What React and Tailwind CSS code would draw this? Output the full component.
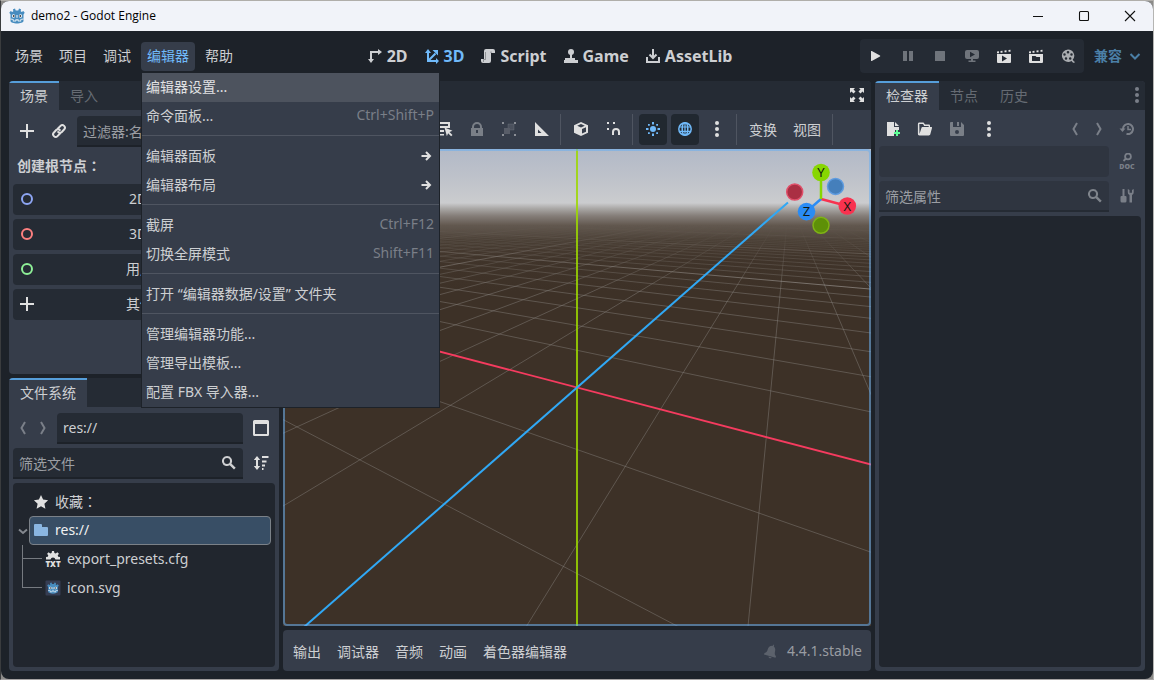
import React from "react";

const ICONS = {
  mode2d: (
    <>
      <path d="M4 12V4h8" fill="none" stroke="currentColor" strokeWidth="2" />
      <path d="M11 1l4 3-4 3zM1 11l3 4 3-4z" />
    </>
  ),
  mode3d: (
    <>
      <path d="M4 4v9h9M4 13l7.500-7.500" fill="none" stroke="currentColor" strokeWidth="2" />
      <path d="M1 5l3-4 3 4zM12 10l3 3-3 3zM8.500 2H14v5.500z" />
    </>
  ),
  script: (
    <>
      <path d="M6 1a2 2 0 0 0-2 2v8H1v2a2 2 0 0 0 2 2h6a2 2 0 0 0 2-2V5h4V3a2 2 0 0 0-2-2z" />
      <path d="M5.500 4v7.500h-2V14" fill="none" stroke="#1d2229" strokeOpacity=".35" />
      <path d="M11 5V3.500" fill="none" stroke="#1d2229" strokeOpacity=".45" />
    </>
  ),
  game: (
    <>
      <circle cx="8" cy="4" r="3" />
      <path d="M7 5h2v5h3v2h3v3H1v-3h1v-2h5z" />
    </>
  ),
  assetlib: (
    <path d="M8 1v8M4.500 6.500L8 10l3.500-3.500M2 9v5h12V9" fill="none" stroke="currentColor" strokeWidth="2" />
  ),
  play: <path d="M3 3.500v9a.5.5 0 0 0 .8.4l8.200-4.500a.5.5 0 0 0 0-.8L3.800 3.100a.5.5 0 0 0-.8.4z" />,
  pause: <path d="M3 3h4v10H3zM9 3h4v10H9z" />,
  stop: <rect x="3" y="3" width="10" height="10" rx=".6" />,
  remote: (
    <path
      fillRule="evenodd"
      d="M3 2a2 2 0 0 0-2 2v5a2 2 0 0 0 2 2h4v1.500H4.500V14h7v-1.500H9V11h4a2 2 0 0 0 2-2V4a2 2 0 0 0-2-2zM6 3.700l5 2.800-5 2.800z"
    />
  ),
  playScene: (
    <>
      <path fillRule="evenodd" d="M1 6h14v8a1 1 0 0 1-1 1H2a1 1 0 0 1-1-1zM6 7.500v6l5-3z" />
      <path d="M1 3.500l2-.3v2H1zM4.500 3l2-.3v2h-2zM8.500 2.500l2-.3v2h-2zM12.500 2l2-.3v2h-2z" />
    </>
  ),
  playCustom: (
    <>
      <path fillRule="evenodd" d="M1 6h14v8a1 1 0 0 1-1 1H2a1 1 0 0 1-1-1zM4 8v5h8V9H8.500l-1-1z" />
      <path d="M1 3.500l2-.3v2H1zM4.500 3l2-.3v2h-2zM8.500 2.500l2-.3v2h-2zM12.500 2l2-.3v2h-2z" />
    </>
  ),
  movie: (
    <path
      fillRule="evenodd"
      d="M8 1.500a6.200 6.200 0 1 0 3.500 11.400c.6.7 1.200 2 3 2.100v-1.600c-1 0-1.200-.8-1.800-1.600A6.200 6.200 0 0 0 8 1.500zM8 3a1.300 1.300 0 1 1 0 2.600A1.300 1.300 0 0 1 8 3zM4.500 5.200a1.200 1.200 0 1 1 0 2.500 1.200 1.200 0 0 1 0-2.500zM11.500 5.200a1.200 1.200 0 1 1 0 2.500 1.200 1.200 0 0 1 0-2.500zM6 9.200a1.200 1.200 0 1 1 0 2.500 1.200 1.200 0 0 1 0-2.500zM10.200 9.200a1.200 1.200 0 1 1 0 2.500 1.200 1.200 0 0 1 0-2.500z"
    />
  ),
  chevronDown: <path d="M3.500 6L8 10.500 12.500 6" fill="none" stroke="currentColor" strokeWidth="2" />,
  back: <path d="M10 2L6.500 8 10 14" fill="none" stroke="currentColor" strokeWidth="2" />,
  forward: <path d="M6 2l3.500 6L6 14" fill="none" stroke="currentColor" strokeWidth="2" />,
  add: <path d="M7 1h2v6h6v2H9v6H7V9H1V7h6z" />,
  link: (
    <g fill="none" stroke="currentColor" strokeWidth="2" strokeLinecap="round">
      <path d="M7 5.500l2.500-2.600a2.500 2.500 0 0 1 3.600 3.600L10.800 9a2.500 2.500 0 0 1-3.600 0" />
      <path d="M9 10.500l-2.500 2.600a2.500 2.500 0 0 1-3.600-3.600L5.200 7a2.500 2.500 0 0 1 3.600 0" />
    </g>
  ),
  ring: <circle cx="8" cy="8" r="5" fill="none" stroke="currentColor" strokeWidth="2" />,
  submenu: <path d="M3.500 8h8M8 4l4 4-4 4" fill="none" stroke="currentColor" strokeWidth="2" />,
  expand: (
    <path d="M1 1h5L4.500 2.500l2 2-2 2-2-2L1 6zM15 1v5l-1.500-1.500-2 2-2-2 2-2L10 1zM1 15v-5l1.500 1.500 2-2 2 2-2 2L6 15zM15 15h-5l1.500-1.500-2-2 2-2 2 2L15 10z" />
  ),
  cursor: <path d="M2 2l12 5-5 2-2 5z" />,
  move: <path d="M8 1l3 3H9v3h3V5l3 3-3 3V9H9v3h2l-3 3-3-3h2V9H4v2L1 8l3-3v2h3V4H5z" />,
  rotate: <path d="M13 8a5 5 0 1 1-2-4M12 1v4H8" fill="none" stroke="currentColor" strokeWidth="2" />,
  scale: <path d="M3 13L13 3M8 3h5v5M3 8v5h5" fill="none" stroke="currentColor" strokeWidth="2" />,
  listSelect: (
    <>
      <path d="M1 1h12v2H1zM1 5h12v2H1zM1 9h6v2H1zM1 13h6v1.500H1z" />
      <path d="M11 2h2v5h-2zM7.500 6.500l8 3.200-3 1.200 3 3-1.400 1.400-3-3-1.200 3z" />
    </>
  ),
  lock: (
    <path
      fillRule="evenodd"
      d="M8 1a5 5 0 0 0-5 5v1H2v8h12V7h-1V6a5 5 0 0 0-5-5zM8 3a3 3 0 0 1 3 3v1H5V6a3 3 0 0 1 3-3zM7 9h2v3H7z"
    />
  ),
  group: (
    <>
      <path d="M1 1h2v2H1zM13 1h2v2h-2zM1 13h2v2H1zM13 13h2v2h-2z" />
      <path d="M7 3h6v6H9V7H7z" opacity=".25" />
      <path d="M3 7h6v6H3z" opacity=".4" />
      <path d="M7 7V3h6v6H9" fill="none" stroke="currentColor" strokeOpacity=".25" />
    </>
  ),
  ruler: <path fillRule="evenodd" d="M2 1v14h14zM5 8.500l3.500 3.500H5z" />,
  cube: (
    <path fillRule="evenodd" d="M8 1l7 3.200v7.600L8 15l-7-3.200V4.200zM9 8v4.600l4-1.900V6.200zM8 3L4.200 4.700 8 6.400l3.800-1.700z" />
  ),
  snap: (
    <>
      <path d="M2 1h2v2H2zM8 1h2v2H8zM2 7h2v2H2z" />
      <path d="M8 14v-3a3 3 0 0 1 6 0v3" fill="none" stroke="currentColor" strokeWidth="2" />
    </>
  ),
  sun: (
    <>
      <circle cx="8" cy="8" r="3" />
      <path d="M7 1h2v2.500H7zM7 12.500h2V15H7zM1 7h2.500v2H1zM12.500 7H15v2h-2.500zM3 3h1.800v1.800H3zM11.200 3H13v1.800h-1.800zM3 11.200h1.800V13H3zM11.200 11.200H13V13h-1.800z" />
    </>
  ),
  globe: (
    <g fill="none" stroke="currentColor" strokeWidth="1.500">
      <circle cx="8" cy="8" r="6.200" />
      <ellipse cx="8" cy="8" rx="2.800" ry="6.200" />
      <path d="M2 6h12M2 10.300h12M8 2v12" strokeWidth="1.200" />
    </g>
  ),
  dots: (
    <>
      <circle cx="8" cy="2" r="2" />
      <circle cx="8" cy="8" r="2" />
      <circle cx="8" cy="14" r="2" />
    </>
  ),
  newFile: (
    <>
      <path d="M2 1h7v5h5v3h-4v2H9v4H2zM10 1l4 4h-4z" />
      <path d="M11 9h2v2h2v2h-2v2h-2v-2H9v-2h2z" fill="#5fff97" />
    </>
  ),
  openFolder: (
    <path
      fillRule="evenodd"
      d="M2 1.500A1.500 1.500 0 0 0 .9 3v9.500a1.700 1.700 0 0 0 1.600 2h9.300c.7 0 1.300-.5 1.500-1.200L15 7c.2-.6-.2-1-.8-1H13V4.500a1 1 0 0 0-1-1H8L6.500 1.500zM2.300 3H6l1.200 2h4.500v1H5.500a1 1 0 0 0-1 .8l-2 6.200z"
    />
  ),
  save: (
    <path
      fillRule="evenodd"
      d="M2 1a1 1 0 0 0-1 1v12a1 1 0 0 0 1 1h12a1 1 0 0 0 1-1V4l-3-3v5H4V1zM8 1h2v4H8zM8 9a2 2 0 1 1 0 4 2 2 0 0 1 0-4z"
    />
  ),
  history: (
    <>
      <path d="M4 8a5 5 0 1 1 3.500 4.800" fill="none" stroke="currentColor" strokeWidth="2" />
      <path d="M.5 7.500h6L3.500 11z" />
      <path d="M9 5v3.500h3" fill="none" stroke="currentColor" strokeWidth="1.500" />
    </>
  ),
  search: (
    <path d="M6 1a5 5 0 1 0 2.700 9.200l4.300 4.300 1.700-1.700-4.300-4.300A5 5 0 0 0 6 1zM6 3a3 3 0 1 1 0 6 3 3 0 0 1 0-6z" fillRule="evenodd" />
  ),
  doc: (
    <>
      <g fill="none" stroke="currentColor" strokeWidth="1.800">
        <circle cx="9" cy="3.500" r="2.900" />
        <path d="M7 5.500L4.500 8" />
      </g>
      <text x="8" y="15.800" fontSize="7" fontWeight="900" textAnchor="middle">
        DOC
      </text>
    </>
  ),
  tools: (
    <>
      <path d="M3.500 1h2v7H6.500a1 1 0 0 1 1 1v4A1.500 1.500 0 0 1 6 14.500H3A1.500 1.500 0 0 1 1.500 13V9a1 1 0 0 1 1-1h1z" />
      <path d="M8.800 1v3.200A3 3 0 0 0 10.500 7v7.500h2.500V7a3 3 0 0 0 1.700-2.800V1l-1.700 1v2.700h-2.500V2z" />
    </>
  ),
  splitView: (
    <path fillRule="evenodd" d="M1.500 0A1.500 1.500 0 0 0 0 1.500v13A1.500 1.500 0 0 0 1.500 16h13a1.500 1.500 0 0 0 1.500-1.500v-13A1.500 1.500 0 0 0 14.500 0zM2 4h12v10H2z" />
  ),
  sort: (
    <>
      <path d="M4 1l3.200 4H5v6h2.200L4 15 .8 11H3V5H.8z" />
      <path d="M9 1h6.500v2H9zM9 5.500h4.500v2H9zM9 9.500h3v2H9zM9 13h1.500v2H9z" />
    </>
  ),
  star: <path d="M8 1l2.100 4.600 5 .6-3.700 3.500 1 5L8 12.200l-4.400 2.500 1-5L.9 6.200l5-.6z" />,
  folder: <path d="M2 2a1 1 0 0 0-1 1v10a1 1 0 0 0 1 1h12a1 1 0 0 0 1-1V6a1 1 0 0 0-1-1H9V3a1 1 0 0 0-1-1z" />,
  cfg: (
    <>
      <path d="M7 0h2l.4 2 1.300.5L12.400 1.300l1.500 1.500-1.200 1.700.5 1.300L15 6v2.500H10.500a2.600 2.600 0 0 0-5 0H1V6l1.800-.2.5-1.300L2.100 2.800l1.500-1.500 1.700 1.200L6.600 2z" />
      <text x="8" y="15.800" fontSize="8" fontWeight="900" textAnchor="middle">
        TXT
      </text>
    </>
  ),
  bell: (
    <path d="M10.500 1.500l-.5 1.300C7 2.500 5.300 4 4.700 6.500c-.5 2-1.200 2.800-3.200 3.500l-.5 1.500 11.500 3.200.5-1.500c-1.200-1.500-1.500-2.500-1-4.500.6-2.300.2-4-1.200-5.200l.4-1.400zM5.500 13.500a1.700 1.700 0 0 0 3.200.9z" />
  ),
};

function Icon({ name, className = "" }) {
  return (
    <svg viewBox="0 0 16 16" width="16" height="16" fill="currentColor" aria-hidden="true" className={`shrink-0 ${className}`}>
      {ICONS[name]}
    </svg>
  );
}

function GodotLogo({ className = "", framed = false }) {
  return (
    <svg viewBox="0 0 16 16" width="16" height="16" aria-hidden="true" className={`shrink-0 ${className}`}>
      {framed && <rect x=".5" y=".5" width="15" height="15" rx="1" fill="#363d52" />}
      <g transform={framed ? "translate(2 2) scale(.75)" : undefined}>
        <path
          fill="#478cbf"
          d="M6 .5l.7 2h2.600l.7-2 2 .8-.3 2 1 .8 1.600-1 1.400 1.600-1.200 1.800V13c0 1.500-3.500 2.500-6.500 2.500S1.500 14.500 1.500 13V6.500L.3 4.700l1.400-1.600 1.600 1 1-.8-.3-2z"
        />
        <path fill="#fff" d="M1.500 10.500l3 .4.200 1.600h1.600l.2-1.200h3l.2 1.200h1.600l.2-1.600 3-.4v1l-2.200.3-.2 1.700H9L8.700 12.400H7.300L7 13.500H3.900l-.2-1.700-2.200-.3z" opacity=".85" />
        <circle cx="4.500" cy="8" r="1.700" fill="#fff" />
        <circle cx="11.500" cy="8" r="1.700" fill="#fff" />
        <circle cx="4.700" cy="8.100" r="1" fill="#414042" />
        <circle cx="11.300" cy="8.100" r="1" fill="#414042" />
        <rect x="7.500" y="7" width="1" height="2.800" fill="#fff" />
      </g>
    </svg>
  );
}

function IconButton({ name, label, className = "text-[#e0e0e0]" }) {
  return (
    <button type="button" aria-label={label} className={`flex h-[31px] w-7 shrink-0 items-center justify-center rounded-sm pb-px ${className}`}>
      <Icon name={name} />
    </button>
  );
}

function Tab({ label, active = false }) {
  return (
    <button
      type="button"
      role="tab"
      aria-selected={active}
      className={`h-[29px] border-t-2 px-[11px] pb-0.5 text-sm leading-6 ${
        active ? "border-[#569eda] bg-[#363d4a] text-[#cdcfd2]" : "border-transparent text-[#666b73]"
      }`}
    >
      {label}
    </button>
  );
}

function Dock({ tabs, extra, className = "", children }) {
  return (
    <section className={`flex flex-col overflow-hidden rounded-sm bg-[#363d4a] ${className}`}>
      <div role="tablist" className="flex h-[29px] shrink-0 items-center bg-[#252b34]">
        {tabs.map((t, i) => (
          <Tab key={t} label={t} active={i === 0} />
        ))}
        {extra}
      </div>
      {children}
    </section>
  );
}

function Heading({ children }) {
  return (
    <span>
      {children}
      <span className="font-['Noto_Sans_CJK_TC',sans-serif]">：</span>
    </span>
  );
}

const FIELD =
  "h-[31px] w-full min-w-0 rounded-t-sm border-b-2 border-[#1d2229] bg-[#252b34] px-1.5 text-sm text-[#cdcfd2] outline-none placeholder:text-[#9b9ea3] placeholder-shown:pt-0.5";

const MENU = [
  { label: "编辑器设置...", hot: true },
  { label: "命令面板...", keys: "Ctrl+Shift+P" },
  null,
  { label: "编辑器面板", sub: true },
  { label: "编辑器布局", sub: true },
  null,
  { label: "截屏", keys: "Ctrl+F12" },
  { label: "切换全屏模式", keys: "Shift+F11" },
  null,
  { label: "打开 “编辑器数据/设置” 文件夹" },
  null,
  { label: "管理编辑器功能..." },
  { label: "管理导出模板..." },
  { label: "配置 FBX 导入器..." },
];

function EditorMenu() {
  return (
    <div role="menu" className="absolute left-0 top-full z-20 mt-px w-[299px] border border-[#1d2229] bg-[#363d4a] text-sm text-[#cdcfd2]">
      {MENU.map((item, i) =>
        item ? (
          <button
            key={i}
            type="button"
            role="menuitem"
            className={`flex h-[29px] w-full items-center justify-between pl-1 pr-[5px] ${item.hot ? "bg-[#4d535e] text-[#e0e1e3]" : ""}`}
          >
            <span>{item.label}</span>
            {item.keys && <span className="pb-0.5 text-[#7a7f88]">{item.keys}</span>}
            {item.sub && <Icon name="submenu" className="text-[#e0e0e0]" />}
          </button>
        ) : (
          <div key={i} role="separator" className="flex h-[11px] items-start pt-1">
            <div className="h-px w-full bg-[#4f5561]" />
          </div>
        )
      )}
    </div>
  );
}

const MENU_BAR = ["场景", "项目", "调试", "编辑器", "帮助"];
const MODES = [
  ["mode2d", "2D"],
  ["mode3d", "3D"],
  ["script", "Script"],
  ["game", "Game"],
  ["assetlib", "AssetLib"],
];
const RUN = [
  ["play", "运行项目", "text-[#e0e0e0]"],
  ["pause", "暂停", "text-[#6f747b]"],
  ["stop", "停止", "text-[#6f747b]"],
  ["remote", "远程部署", "text-[#6f747b]"],
  ["playScene", "运行当前场景", "text-[#e0e0e0]"],
  ["playCustom", "运行指定场景", "text-[#e0e0e0]"],
  ["movie", "影片制作模式", "text-[#a9acb0]"],
];

function TopBar() {
  return (
    <header className="flex h-[50px] shrink-0 items-center justify-between px-2">
      <nav className="flex gap-1">
        {MENU_BAR.map((m) => {
          const open = m === "编辑器";
          return (
            <div key={m} className="relative">
              <button
                type="button"
                aria-expanded={open}
                className={`block h-[29px] rounded-sm px-1.5 text-sm ${open ? "bg-[#363d4a] text-[#70bafa]" : "text-[#cdcfd2]"}`}
              >
                {m}
              </button>
              {open && <EditorMenu />}
            </div>
          );
        })}
      </nav>
      <div className="flex">
        {MODES.map(([icon, label]) => (
          <button
            key={label}
            type="button"
            className={`flex h-8 items-center gap-1 px-2 text-base font-bold ${label === "3D" ? "text-[#70bafa]" : "text-[#cdcfd2]"}`}
          >
            <Icon name={icon} />
            {label}
          </button>
        ))}
      </div>
      <div className="flex items-center">
        <div className="flex rounded-sm bg-[#252b34]">
          {RUN.map(([icon, label, color]) => (
            <button key={icon} type="button" aria-label={label} className={`flex h-[34px] w-8 items-center justify-center ${color}`}>
              <Icon name={icon} />
            </button>
          ))}
        </div>
        <button type="button" className="flex items-center gap-[5px] pl-2.5 pr-0.5 text-sm font-bold text-[#4b7fa6]">
          兼容
          <Icon name="chevronDown" />
        </button>
      </div>
    </header>
  );
}

const ROOTS = [
  ["ring", "2D 场景", "text-[#8da5f3]"],
  ["ring", "3D 场景", "text-[#fc7f7f]"],
  ["ring", "用户界面", "text-[#8eef97]"],
  ["add", "其他节点", "text-[#e0e0e0]"],
];

function SceneDock() {
  return (
    <Dock tabs={["场景", "导入"]} className="flex-1">
      <div className="flex items-center gap-1 px-1 pt-1.5">
        <IconButton name="add" label="添加节点" />
        <IconButton name="link" label="实例化场景" />
        <input aria-label="过滤器" placeholder="过滤器:名称" className={FIELD} />
      </div>
      <div className="flex h-[37px] items-center px-2 text-sm font-bold text-[#cdcfd2]">
        <Heading>创建根节点</Heading>
      </div>
      <div className="flex flex-col gap-1 px-1">
        {ROOTS.map(([icon, label, color]) => (
          <button key={label} type="button" className="flex h-[31px] items-center rounded-sm bg-[#252b34] pb-px pl-1.5 text-sm text-[#cdcfd2]">
            <Icon name={icon} className={color} />
            <span className="flex-1 pr-0.5 text-center">{label}</span>
          </button>
        ))}
      </div>
    </Dock>
  );
}

function FileSystemDock() {
  return (
    <Dock tabs={["文件系统"]} className="flex-1">
      <div className="flex flex-1 flex-col gap-1 p-1">
        <div className="flex items-center gap-1 pt-0.5">
          <div className="flex w-10 shrink-0 justify-center gap-1 pb-px text-[#7a7f88]">
            <button type="button" aria-label="后退">
              <Icon name="back" />
            </button>
            <button type="button" aria-label="前进">
              <Icon name="forward" />
            </button>
          </div>
          <input aria-label="路径" defaultValue="res://" className={FIELD} />
          <IconButton name="splitView" label="切换拆分模式" />
        </div>
        <div className="flex items-center gap-1">
          <div className="relative flex-1">
            <input aria-label="筛选文件" placeholder="筛选文件" className={FIELD} />
            <Icon name="search" className="pointer-events-none absolute right-1.5 top-[7px] text-[#cfd0d2]" />
          </div>
          <IconButton name="sort" label="文件排序" />
        </div>
        <div role="tree" className="flex-1 rounded-sm bg-[#21262e] p-1 text-sm text-[#cdcfd2]">
          <div role="treeitem" className="flex h-[29px] items-center gap-1.5 pl-4">
            <Icon name="star" className="text-[#e0e0e0]" />
            <Heading>收藏</Heading>
          </div>
          <div className="flex items-center">
            <button type="button" aria-label="折叠" className="-ml-0.5 w-[14px] text-[#84888f]">
              <svg viewBox="0 0 14 14" width="14" height="14" aria-hidden="true">
                <path d="M4 5.500l4 3.500 4-3.500" fill="none" stroke="currentColor" strokeWidth="2" />
              </svg>
            </button>
            <div role="treeitem" aria-selected="true" className="flex h-[29px] flex-1 items-center gap-1.5 rounded-sm border border-[#7b8188] bg-[#384e65] pb-0.5 pl-[3px] text-[#f0f1f2]">
              <Icon name="folder" className="text-[#8ab6e1]" />
              res://
            </div>
          </div>
          <div className="flex">
            <div className="ml-[5px] w-5">
              <div className="h-[14px] border-b border-l border-[#767a80]" />
              <div className="h-[29px] border-b border-l border-[#767a80]" />
            </div>
            <div className="pl-[3px]">
              <div role="treeitem" className="flex h-[29px] items-center gap-1.5 pb-0.5">
                <Icon name="cfg" className="text-[#e0e0e0]" />
                export_presets.cfg
              </div>
              <div role="treeitem" className="flex h-[29px] items-center gap-1.5 pb-0.5">
                <GodotLogo framed />
                icon.svg
              </div>
            </div>
          </div>
        </div>
      </div>
    </Dock>
  );
}

const VIEW_W = 588;
const VIEW_H = 477;
const FOCAL = VIEW_H / 2 / Math.tan((35 * Math.PI) / 180);
const S = Math.sin(0.5);
const C = Math.cos(0.5);
const DISTANCE = 4;
const depthAt = (x, z) => DISTANCE - S * C * x - C * C * z;

function project(x, z) {
  const d = depthAt(x, z);
  return [VIEW_W / 2 + (FOCAL * (C * x - S * z)) / d, VIEW_H / 2 + (FOCAL * (S * S * x + C * S * z)) / d];
}

function groundLine(x1, z1, x2, z2) {
  const near = 0.3;
  const d1 = depthAt(x1, z1);
  const d2 = depthAt(x2, z2);
  if (d1 < near && d2 < near) return "";
  let a = [x1, z1];
  let b = [x2, z2];
  const t = (near - d1) / (d2 - d1);
  const cut = [x1 + (x2 - x1) * t, z1 + (z2 - z1) * t];
  if (d1 < near) a = cut;
  if (d2 < near) b = cut;
  return `M${project(...a).map((v) => v.toFixed(2)).join(" ")}L${project(...b).map((v) => v.toFixed(2)).join(" ")}`;
}

const EXTENT = 72;
let minor = "";
let major = "";
for (let i = -EXTENT; i <= EXTENT; i++) {
  if (i === 0) continue;
  const d = groundLine(i, -EXTENT, i, EXTENT) + groundLine(-EXTENT, i, EXTENT, i);
  if (i % 8 === 0) major += d;
  else minor += d;
}
const xAxis = groundLine(-400, 0, 400, 0);
const zAxis = groundLine(0, -1000, 0, 1000);

function Viewport() {
  return (
    <div className="relative flex-1 overflow-hidden bg-[#3d3127]">
      <svg
        role="img"
        aria-label="3D 视口"
        viewBox={`0 0 ${VIEW_W} ${VIEW_H}`}
        preserveAspectRatio="xMidYMid slice"
        className="absolute inset-0 h-full w-full"
      >
        <defs>
          <linearGradient id="sky" x1="0" y1="0" x2="0" y2={VIEW_H} gradientUnits="userSpaceOnUse">
            <stop offset="0" stopColor="#b2b9c7" />
            <stop offset=".06" stopColor="#bec2ca" />
            <stop offset=".113" stopColor="#cbccce" />
            <stop offset=".125" stopColor="#a9a7a5" />
            <stop offset=".14" stopColor="#857e79" />
            <stop offset=".16" stopColor="#62584f" />
            <stop offset=".19" stopColor="#4a3f35" />
            <stop offset=".23" stopColor="#40342a" />
            <stop offset=".3" stopColor="#3d3127" />
          </linearGradient>
          <linearGradient id="fade" x1="0" y1="0" x2="0" y2={VIEW_H} gradientUnits="userSpaceOnUse">
            <stop offset=".16" stopColor="#000" />
            <stop offset=".22" stopColor="#777" />
            <stop offset=".3" stopColor="#fff" />
          </linearGradient>
          <mask id="horizon" maskUnits="userSpaceOnUse" x="0" y="0" width={VIEW_W} height={VIEW_H}>
            <rect width={VIEW_W} height={VIEW_H} fill="url(#fade)" />
          </mask>
        </defs>
        <rect width={VIEW_W} height={VIEW_H} fill="url(#sky)" />
        <g mask="url(#horizon)" fill="none">
          <path d={minor} stroke="#8a8680" strokeOpacity=".45" />
          <path d={major} stroke="#c4c2bf" strokeOpacity=".5" />
        </g>
        <path d={xAxis} fill="none" stroke="#f53b5f" strokeWidth="1.800" />
        <path d={`M${VIEW_W / 2} 0V${VIEW_H}`} stroke="#9cd800" strokeOpacity=".85" strokeWidth="2" />
        <path d={zAxis} fill="none" stroke="#30a8f5" strokeWidth="2" />
      </svg>
      <svg viewBox="0 0 100 100" width="100" height="100" role="img" aria-label="视图方向" className="absolute right-0 top-0">
        <circle cx="23.700" cy="43" r="8" fill="#aa2f43" stroke="#e0506a" strokeWidth="1.500" />
        <circle cx="64.500" cy="37.400" r="8" fill="#457fbb" stroke="#5f9ce0" strokeWidth="1.500" />
        <circle cx="50" cy="76.300" r="8" fill="#5e9008" stroke="#7fb315" strokeWidth="1.500" />
        <g strokeWidth="2.500">
          <path d="M50 50L76.300 57" stroke="#f8324f" />
          <path d="M50 50L35.500 62.600" stroke="#2a8cf5" />
          <path d="M50 50V23.500" stroke="#87d602" />
        </g>
        <circle cx="76.300" cy="57" r="8.800" fill="#f8324f" />
        <circle cx="35.500" cy="62.600" r="8.800" fill="#2a8cf5" />
        <circle cx="50" cy="23.500" r="8.800" fill="#87d602" />
        <g fontSize="13" textAnchor="middle" fill="#111a10">
          <text x="76.300" y="61.500">X</text>
          <text x="35.500" y="67">Z</text>
          <text x="50" y="28">Y</text>
        </g>
      </svg>
      <div className="pointer-events-none absolute inset-0 rounded-sm border-2 border-[#69aef0]/55" />
    </div>
  );
}

function Divider() {
  return (
    <div className="flex h-[31px] w-1 shrink-0 pl-px">
      <div className="w-px bg-[#4f5561]" />
    </div>
  );
}

function ViewportPanel() {
  return (
    <section className="flex min-w-0 flex-1 flex-col gap-1">
      <div className="flex flex-1 flex-col overflow-hidden rounded-t-sm bg-[#363d4a]">
        <div className="flex h-[29px] shrink-0 items-center justify-end bg-[#252b34]">
          <IconButton name="expand" label="专注模式" />
        </div>
        <div className="flex h-[39px] shrink-0 items-center gap-1 px-1 text-sm text-[#cdcfd2]">
          <IconButton name="cursor" label="选择" />
          <Divider />
          <IconButton name="move" label="移动" />
          <IconButton name="rotate" label="旋转" />
          <IconButton name="scale" label="缩放" />
          <Divider />
          <IconButton name="listSelect" label="列出可选节点" />
          <IconButton name="lock" label="锁定" className="text-[#7a7f87]" />
          <IconButton name="group" label="编组" className="text-[#8b8f96]" />
          <IconButton name="ruler" label="标尺" />
          <Divider />
          <IconButton name="cube" label="本地空间" />
          <IconButton name="snap" label="吸附" />
          <Divider />
          <IconButton name="sun" label="预览阳光" className="bg-[#212830] text-[#70bafa]" />
          <IconButton name="globe" label="预览环境" className="bg-[#212830] text-[#70bafa]" />
          <IconButton name="dots" label="更多" />
          <Divider />
          <button type="button" className="shrink-0 px-1.5">变换</button>
          <button type="button" className="shrink-0 px-1.5">视图</button>
          <Divider />
        </div>
        <Viewport />
      </div>
      <div className="flex h-[41px] shrink-0 items-center gap-4 rounded-sm bg-[#363d4a] pl-2.5 pr-[9px] text-sm text-[#cdcfd2]">
        {["输出", "调试器", "音频", "动画", "着色器编辑器"].map((t) => (
          <button key={t} type="button" className="pt-0.5">
            {t}
          </button>
        ))}
        <div className="ml-auto flex items-center gap-2 text-[#999ca2]">
          <Icon name="bell" className="text-[#5c626c]" />
          <span>4.4.1.stable</span>
        </div>
      </div>
    </section>
  );
}

function InspectorDock() {
  return (
    <Dock
      tabs={["检查器", "节点", "历史"]}
      className="w-[270px] shrink-0"
      extra={
        <button type="button" aria-label="面板选项" className="ml-auto w-4 pb-px text-[#7a7f88]">
          <Icon name="dots" />
        </button>
      }
    >
      <div className="flex flex-1 flex-col gap-1 px-1 pb-1">
        <div className="flex h-8 items-center gap-1 pt-[7px]">
          <IconButton name="newFile" label="新建资源" />
          <IconButton name="openFolder" label="加载资源" />
          <IconButton name="save" label="保存资源" className="text-[#7a7f87]" />
          <IconButton name="dots" label="更多选项" />
          <div className="ml-auto flex items-center gap-2 text-[#7a7f88]">
            <button type="button" aria-label="上一个" className="pb-px">
              <Icon name="back" />
            </button>
            <button type="button" aria-label="下一个" className="pb-px">
              <Icon name="forward" />
            </button>
            <IconButton name="history" label="对象历史" className="-ml-0.5 text-[#7a7f88]" />
          </div>
        </div>
        <div className="flex items-center gap-1">
          <button type="button" aria-label="对象" className="h-[31px] flex-1 rounded-sm bg-[#2f3540]" />
          <IconButton name="doc" label="打开文档" className="text-[#7a7f88]" />
        </div>
        <div className="flex items-center gap-1">
          <div className="relative flex-1">
            <input
              aria-label="筛选属性"
              placeholder="筛选属性"
              className="h-[31px] w-full rounded-t-sm border-b-2 border-[#252b34] bg-[#2f3540] px-1.5 text-sm text-[#cdcfd2] outline-none placeholder:text-[#9b9ea3] placeholder-shown:pt-0.5"
            />
            <Icon name="search" className="pointer-events-none absolute right-1.5 top-[7px] text-[#7f848b]" />
          </div>
          <IconButton name="tools" label="管理属性" className="text-[#7a7f88]" />
        </div>
        <div className="flex-1 rounded-sm bg-[#21262e]" />
      </div>
    </Dock>
  );
}

function TitleBar() {
  return (
    <div className="flex h-[30px] shrink-0 items-center bg-[#f1f3f9] pl-2 text-black">
      <GodotLogo />
      <span className="ml-1.5 flex-1 font-['Open_Sans','Noto_Sans',sans-serif] text-xs">demo2 - Godot Engine</span>
      {[
        ["最小化", "M1 6.500h10"],
        ["最大化", "M2.500 1.500h7a1 1 0 0 1 1 1v7a1 1 0 0 1-1 1h-7a1 1 0 0 1-1-1v-7a1 1 0 0 1 1-1z"],
        ["关闭", "M1 1l10 10M11 1L1 11"],
      ].map(([label, d]) => (
        <button key={label} type="button" aria-label={label} className="flex h-full w-[46px] items-center justify-center">
          <svg viewBox="0 0 12 12" width="12" height="12" fill="none" stroke="#111" strokeWidth="1.100" aria-hidden="true">
            <path d={d} />
          </svg>
        </button>
      ))}
    </div>
  );
}

export default function App() {
  return (
    <div className="flex min-h-screen border border-b-[#a5a2a2] border-l-[#3a3c3e] border-r-[#b5b5b3] border-t-[#b0aeaa] bg-[#8c8b89] font-['Noto_Sans','Noto_Sans_CJK_SC',sans-serif]">
      <div className="flex min-w-0 flex-1 flex-col overflow-hidden rounded-lg bg-[#1d2229]">
        <TitleBar />
        <TopBar />
        <main className="flex flex-1 gap-1 px-2 pb-2">
          <div className="flex w-[270px] shrink-0 flex-col gap-1">
            <SceneDock />
            <FileSystemDock />
          </div>
          <ViewportPanel />
          <InspectorDock />
        </main>
      </div>
    </div>
  );
}
